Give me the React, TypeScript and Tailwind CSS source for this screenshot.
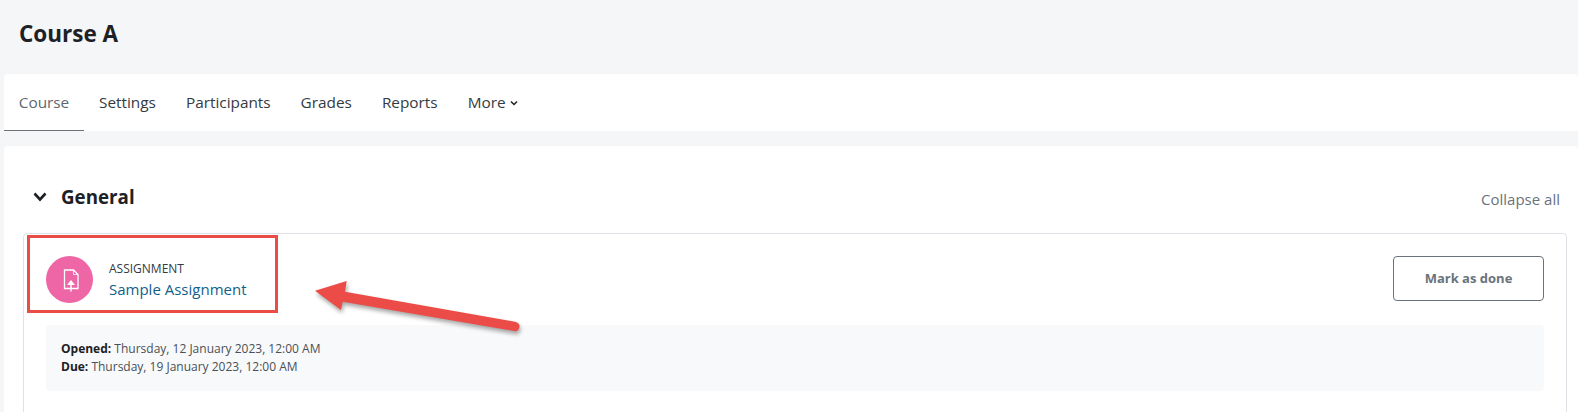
import React from "react";

const tabs = ["Settings", "Participants", "Grades", "Reports"];

function FileIcon() {
  return (
    <svg width="22" height="26" viewBox="0 0 22 26" fill="none" stroke="#fff" strokeWidth="1.3">
      <path d="M5.5 3H14.5L19 7.5V21.5H5.5Z" />
      <path d="M14.5 3V7.5H19" strokeWidth="0.8" />
      <path d="M12 24.5V15" strokeWidth="1.5" />
      <path d="M12 13L16 18H8Z" fill="#fff" stroke="none" />
    </svg>
  );
}

export default function App() {
  return (
    <div className="relative h-[412px] w-[1578px] overflow-hidden bg-[#f5f6f8] pl-[4px] font-['Open_Sans',sans-serif]">
      <div className="flex h-[74px] items-center pb-[6px] pl-[15px]">
        <h1 className="text-[22.5px] font-bold text-[#1d2125]">Course A</h1>
      </div>
      <nav className="flex h-[57px] items-stretch rounded-t-[4px] bg-white pt-[1px] text-[15.35px] text-[#343a40]">
        <div className="flex w-[80px] items-center justify-center border-b border-[#6a737b] text-[#5d6770]">Course</div>
        {tabs.map((t) => (
          <div key={t} className="flex items-center px-[15px]">{t}</div>
        ))}
        <div className="flex items-center gap-[4px] px-[15px]">
          More
          <svg width="8" height="6" viewBox="0 0 8 6" fill="none" stroke="#1d2125" strokeWidth="1.5"><path d="M1 1.5L4 4.5L7 1.5" /></svg>
        </div>
      </nav>
      <main className="mt-[15px] rounded-t-[4px] bg-white pl-[19px] pr-[11px] pt-[34px]">
        <div className="flex h-[34px] items-center justify-between pr-[7px]">
          <div className="flex items-center gap-[14px] pl-[10px]">
            <svg width="14" height="10" viewBox="0 0 14 10" fill="none" stroke="#1d2125" strokeWidth="2.6"><path d="M1.5 1.5L7 7.5L12.5 1.5" /></svg>
            <h2 className="text-[18.75px] font-bold text-[#1d2125]">General</h2>
          </div>
          <span className="relative top-[2px] text-[15px] text-[#6a737b]">Collapse all</span>
        </div>
        <div className="mt-[19px] h-[200px] rounded-[4px] border border-[#dee2e6] px-[22px] pt-[22px]">
          <div className="flex h-[47px] items-center justify-between">
            <div className="flex items-center gap-[16px]">
              <div className="flex h-[47px] w-[47px] items-center justify-center rounded-full bg-[#ee66a6]">
                <FileIcon />
              </div>
              <div className="flex flex-col pb-[2px]">
                <span className="text-[12px] leading-[20px] text-[#343a40]">ASSIGNMENT</span>
                <span className="text-[15px] leading-[20px] text-[#115f8c]">Sample Assignment</span>
              </div>
            </div>
            <div className="flex h-[45px] w-[151px] items-center justify-center self-start rounded-[4px] border border-[#6a737b] text-[13px] font-bold text-[#6a737b]">Mark as done</div>
          </div>
          <div className="mt-[22px] flex h-[66px] flex-col justify-center rounded-[4px] bg-[#f8f9fa] px-[15px] text-[12px] leading-[18px] text-[#495057]">
            <div><b className="text-[#1d2125]">Opened:</b> Thursday, 12 January 2023, 12:00 AM</div>
            <div><b className="text-[#1d2125]">Due:</b> Thursday, 19 January 2023, 12:00 AM</div>
          </div>
        </div>
      </main>
      <div className="absolute left-[27px] top-[235px] h-[78px] w-[251px] border-[3px] border-[#ea4c46]" />
      <svg className="absolute left-0 top-0 drop-shadow-[1px_3px_2px_rgba(0,0,0,0.35)]" width="1578" height="412" fill="none">
        <path d="M315 290.7L346.7 281L345 291.7L515 321.7Q520 323 519.5 327Q518.5 332 514 331L342.7 301.7L341 310Z" fill="#ec4c47" />
      </svg>
    </div>
  );
}
